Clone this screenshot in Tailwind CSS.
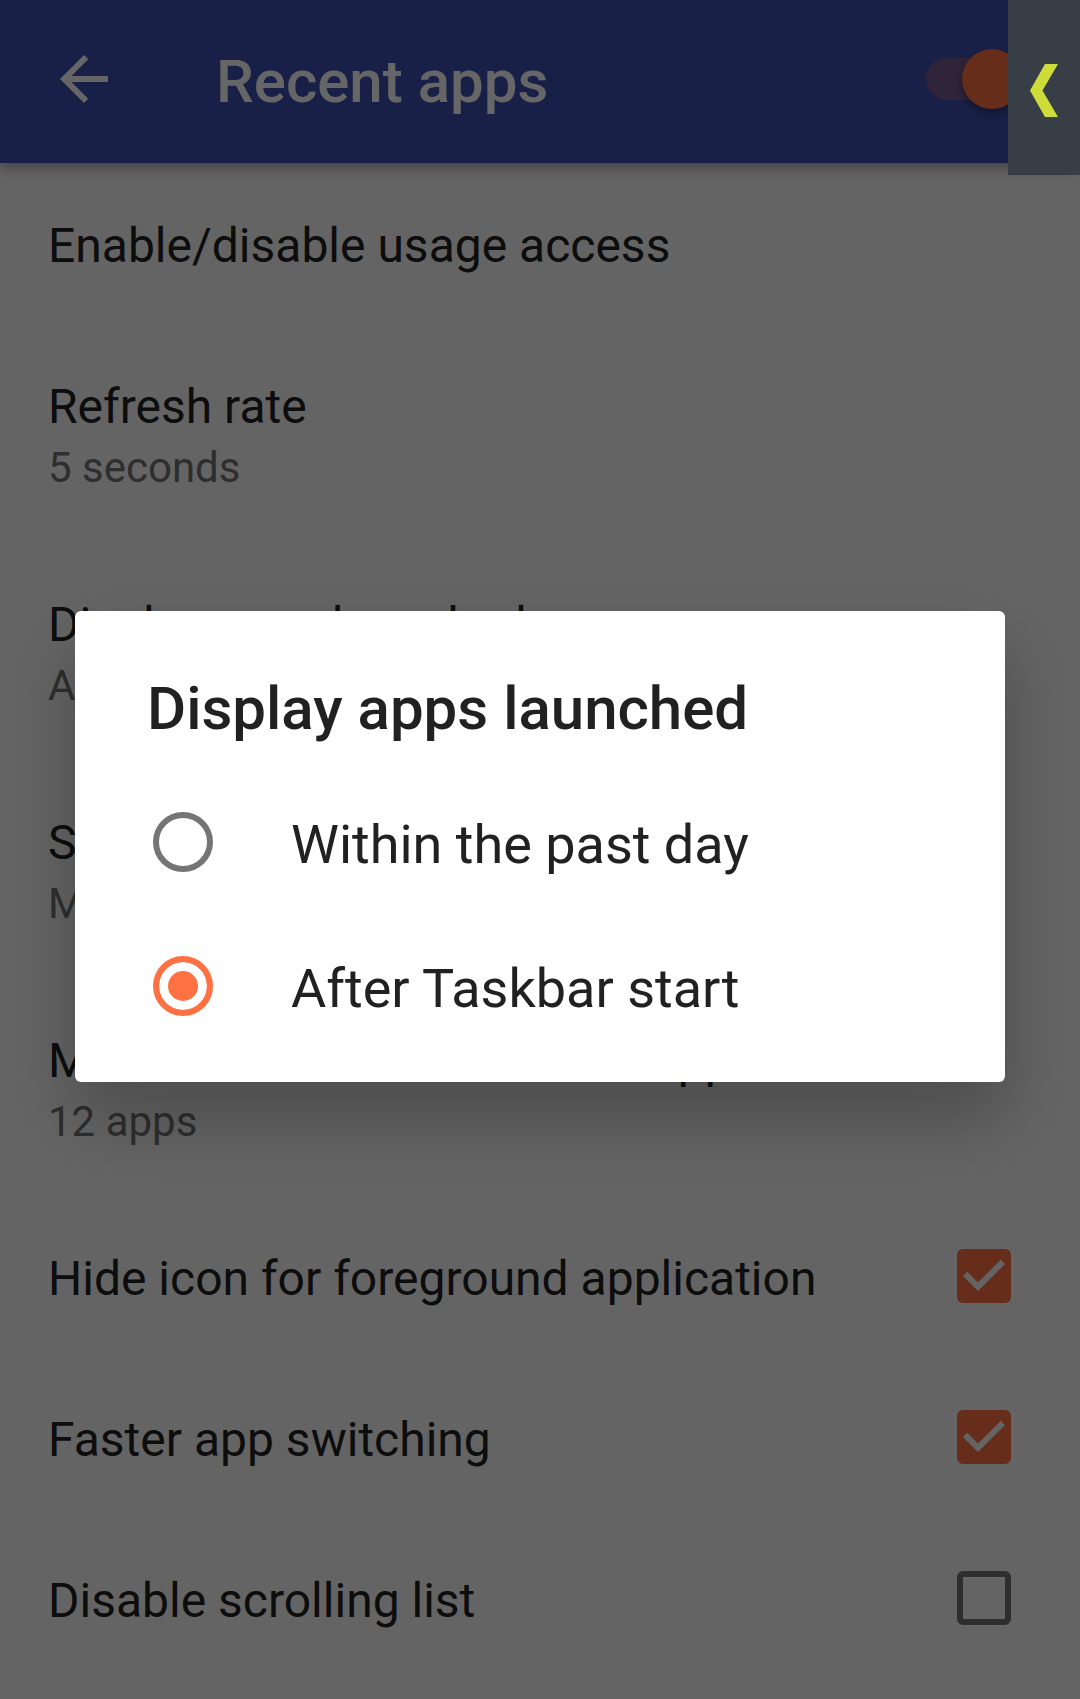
<!DOCTYPE html>
<html lang="en">
<head>
<meta charset="utf-8">
<meta name="viewport" content="width=device-width, initial-scale=1">
<title>Recent apps</title>
<script src="https://cdn.jsdelivr.net/npm/@tailwindcss/browser@4"></script>
</head>
<body class="min-h-screen bg-[#fafafa] font-['Roboto',sans-serif] text-[#212121]">

<header class="relative flex h-[163px] items-center bg-[#3f51b5] pr-[52px] pb-1.5 pl-12 text-white shadow-[0_4px_14px_rgba(0,0,0,0.4)]">
  <button type="button" aria-label="Back" class="size-[72px] shrink-0">
    <svg viewBox="0 0 24 24" class="size-full" fill="currentColor" aria-hidden="true"><path d="M20 11H7.83l5.59-5.59L12 4l-8 8 8 8 1.41-1.41L7.83 13H20v-2z"/></svg>
  </button>
  <h1 class="ml-24 grow pt-1.5 text-[60px] leading-[72px] font-medium">Recent apps</h1>
  <input type="checkbox" role="switch" checked aria-label="Recent apps" class="relative h-[42px] w-[102px] shrink-0 appearance-none rounded-full bg-[#ff7043]/30 before:absolute before:-top-[9px] before:left-9 before:size-[60px] before:rounded-full before:bg-[#ff7043] before:shadow-[0_4px_8px_rgba(0,0,0,0.4)] before:content-['']">
</header>

<main class="pt-0.5 text-[48px] leading-[64px]">
  <ul>
    <li class="flex h-[161px] items-center px-12"><a href="#usage">Enable/disable usage access</a></li>
    <li class="px-12 pt-[49px] pb-[47px]"><a href="#refresh" class="block">Refresh rate<span class="block text-[42px] leading-[58px] text-[#737373]">5 seconds</span></a></li>
    <li class="px-12 pt-[49px] pb-[47px]"><a href="#launched" class="block">Display apps launched<span class="block text-[42px] leading-[58px] text-[#737373]">After Taskbar start</span></a></li>
    <li class="px-12 pt-[49px] pb-[47px]"><a href="#sort" class="block">Sort by<span class="block text-[42px] leading-[58px] text-[#737373]">Most recent</span></a></li>
    <li class="px-12 pt-[49px] pb-[47px]"><a href="#maximum" class="block">Maximum number of recent apps<span class="block text-[42px] leading-[58px] text-[#737373]">12 apps</span></a></li>
    <li class="flex h-[161px] items-center justify-between pr-[69px] pl-12">
      <label for="hide">Hide icon for foreground application</label>
      <span class="mb-1.5 grid size-[54px] shrink-0">
        <input id="hide" type="checkbox" checked class="peer col-start-1 row-start-1 appearance-none rounded-[6px] border-6 border-[#737373] checked:border-[#ff7043] checked:bg-[#ff7043]">
        <svg viewBox="3 3 18 18" class="pointer-events-none invisible col-start-1 row-start-1 fill-[#fafafa] peer-checked:visible" aria-hidden="true"><path d="M10 17l-5-5 1.410-1.410L10 14.170l7.590-7.590L19 8z"/></svg>
      </span>
    </li>
    <li class="flex h-[161px] items-center justify-between pr-[69px] pl-12">
      <label for="faster">Faster app switching</label>
      <span class="mb-1.5 grid size-[54px] shrink-0">
        <input id="faster" type="checkbox" checked class="peer col-start-1 row-start-1 appearance-none rounded-[6px] border-6 border-[#737373] checked:border-[#ff7043] checked:bg-[#ff7043]">
        <svg viewBox="3 3 18 18" class="pointer-events-none invisible col-start-1 row-start-1 fill-[#fafafa] peer-checked:visible" aria-hidden="true"><path d="M10 17l-5-5 1.410-1.410L10 14.170l7.590-7.590L19 8z"/></svg>
      </span>
    </li>
    <li class="flex h-[161px] items-center justify-between pr-[69px] pl-12">
      <label for="scrolling">Disable scrolling list</label>
      <span class="mb-1.5 grid size-[54px] shrink-0">
        <input id="scrolling" type="checkbox" class="peer col-start-1 row-start-1 appearance-none rounded-[6px] border-6 border-[#737373] checked:border-[#ff7043] checked:bg-[#ff7043]">
        <svg viewBox="3 3 18 18" class="pointer-events-none invisible col-start-1 row-start-1 fill-[#fafafa] peer-checked:visible" aria-hidden="true"><path d="M10 17l-5-5 1.410-1.410L10 14.170l7.590-7.590L19 8z"/></svg>
      </span>
    </li>
  </ul>
</main>

<!-- Scrim and dialog -->
<div class="fixed inset-0 flex items-center justify-center bg-black/60 px-[75px] pb-1.5">
  <div role="dialog" aria-modal="true" aria-labelledby="dialog-title" class="w-full rounded-[6px] bg-white pt-[62px] pb-[21px] shadow-[0_36px_72px_rgba(0,0,0,0.25)]">
    <h2 id="dialog-title" class="mb-7 px-[72px] text-[60px] leading-[72px] font-medium">Display apps launched</h2>
    <div role="radiogroup" aria-labelledby="dialog-title" class="text-[54px] leading-[64px]">
      <label class="flex h-36 items-center pl-[78px]">
        <input type="radio" name="launched" class="mb-1.5 size-[60px] shrink-0 appearance-none rounded-full border-6 border-[#757575] checked:border-[#ff7043] checked:bg-[#ff7043] checked:shadow-[inset_0_0_0_9px_white]">
        <span class="ml-[78px]">Within the past day</span>
      </label>
      <label class="flex h-36 items-center pl-[78px]">
        <input type="radio" name="launched" checked class="mb-1.5 size-[60px] shrink-0 appearance-none rounded-full border-6 border-[#757575] checked:border-[#ff7043] checked:bg-[#ff7043] checked:shadow-[inset_0_0_0_9px_white]">
        <span class="ml-[78px]">After Taskbar start</span>
      </label>
    </div>
  </div>
</div>

<!-- Floating collapse tab -->
<button type="button" aria-label="Collapse taskbar" class="fixed top-0 right-0 flex h-[175px] w-[72px] items-center justify-center bg-[#373e45]">
  <svg viewBox="0 0 28 53" class="mt-1.5 h-[53px] w-7 fill-[#cddc39]" aria-hidden="true"><path d="M15 0h13L12.500 26.500 28 53H15L0 26.500z"/></svg>
</button>

</body>
</html>
